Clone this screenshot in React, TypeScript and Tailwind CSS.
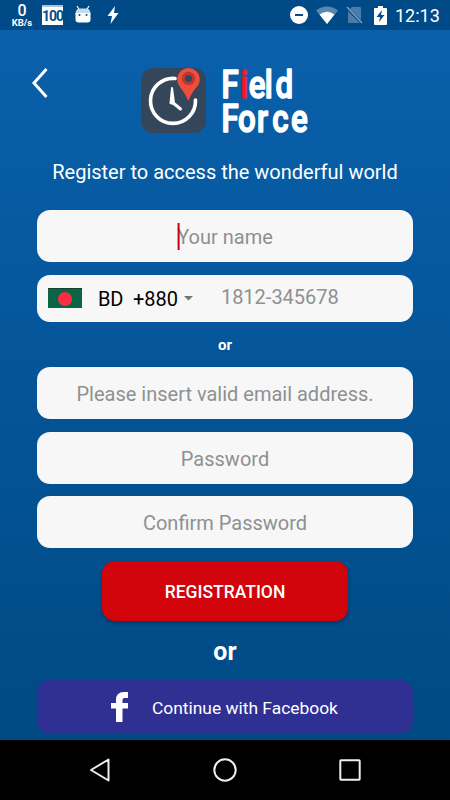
import React from "react";

function StatusBar() {
  return (
    <header className="flex h-[30px] shrink-0 items-center bg-[#004a87] text-white">
      <div className="ml-[11px] flex w-[22px] flex-col items-center pt-[2px]">
        <span className="h-[12px] text-[16px] leading-[12px] font-medium">0</span>
        <span className="mt-px h-[9px] text-[9.500px] leading-[9px] font-bold whitespace-nowrap">KB/s</span>
      </div>
      <div className="ml-[9px] flex h-[20px] w-[21px] items-center justify-center border-t-2 border-solid border-[#a9c3da] bg-white">
        <span className="text-[14px] leading-none font-bold tracking-[-1px] text-[#074b87]">100</span>
      </div>
      <svg className="ml-[12px]" width="16" height="20" viewBox="0 0 16 20">
        <path d="M2 1l2.5 4M14 1l-2.5 4" stroke="#fff" strokeWidth="1.2" />
        <path d="M.5 9q0-5.500 4.500-5.500h6q4.500 0 4.500 5.500z" fill="#c8dbea" />
        <path d="M.5 8h15v6.500q0 3-3 3h-9q-3 0-3-3z" fill="#fff" />
        <circle cx="4.500" cy="10" r="1" fill="#074b87" />
        <circle cx="11.500" cy="10" r="1" fill="#074b87" />
      </svg>
      <svg className="ml-[16px]" width="12" height="20" viewBox="0 0 12 20">
        <path d="M8 1L.5 11H5L3.500 19L11.500 8H7z" fill="#fff" />
      </svg>
      <div className="flex-1" />
      <svg width="18" height="18" viewBox="0 0 18 18">
        <circle cx="9" cy="9" r="9" fill="#fff" />
        <path d="M5 9h8" stroke="#074b87" strokeWidth="2" />
      </svg>
      <svg className="ml-[8px]" width="22" height="18" viewBox="0 0 22 18">
        <path d="M0 4.500Q11-3.500 22 4.500L11 18z" fill="#5888b2" />
        <path d="M3.500 8.500Q11 3 18.500 8.500L11 18z" fill="#fff" />
      </svg>
      <svg className="ml-[8px]" width="17" height="18" viewBox="0 0 17 18">
        <path d="M6 1h8q1 0 1 1v12L4 3zM2 5l12 12H3q-1 0-1-1z" fill="#4a7dab" />
        <path d="M1 1l15 16" stroke="#82a6c5" strokeWidth="1.300" />
      </svg>
      <svg className="ml-[11px]" width="13" height="19" viewBox="0 0 13 19">
        <path d="M4 0h5v2h3q1 0 1 1v15q0 1-1 1H1q-1 0-1-1V3q0-1 1-1h3z" fill="#fff" />
        <path d="M8 4L2.500 11H6l-1 5 5.500-7H7z" fill="#004a87" />
      </svg>
      <span className="mr-[10px] ml-[8px] w-[45px] pt-px text-[18px] leading-[30px] whitespace-nowrap">12:13</span>
    </header>
  );
}

function Logo() {
  return (
    <svg className="ml-[93px] overflow-visible" width="170" height="70" viewBox="0 0 170 70">
      <rect x="0" y="3" width="65" height="65" rx="12" fill="#34475a" />
      <path d="M34 13.500A22.500 22.500 0 1 0 54.500 35" fill="none" stroke="#fff" strokeWidth="3.600" strokeLinecap="round" />
      <path d="M31 23L29.500 38Q32 39 33 38z" fill="#fff" stroke="#fff" strokeWidth="2" strokeLinejoin="round" />
      <path d="M31 37L39.500 44" stroke="#fff" strokeWidth="3" strokeLinecap="round" />
      <path d="M47.500 36Q44 28 38 20.500A11.300 11.300 0 1 1 57 20.500Q50 28 47.500 36z" fill="#ef4d3e" />
      <circle cx="47.500" cy="13.500" r="6.800" fill="#bd382e" />
      <circle cx="47.500" cy="13.500" r="3.500" fill="#34475a" />
      <g
        className="font-['Roboto','Liberation_Sans',sans-serif] font-medium"
        fontSize="39"
        fill="#fff"
        stroke="#fff"
        strokeWidth="1.600"
        strokeLinejoin="round"
      >
        <text transform="translate(80.500 33) scale(.8 1)" x="0 23.500 34 54 67.500">
          F<tspan fill="#fb1720" stroke="#fb1720" strokeWidth="1">i</tspan>eld
        </text>
        <text transform="translate(80.500 67) scale(.8 1)" x="0 20.500 44.500 63.500 87">Force</text>
      </g>
    </svg>
  );
}

const fieldClass =
  "flex h-[52px] shrink-0 items-center justify-center rounded-[13px] bg-[#f7f7f7] text-[20px] text-[#8e9092]";

export default function App() {
  return (
    <div className="flex h-[800px] w-[450px] flex-col overflow-hidden bg-black font-['Roboto','Liberation_Sans',sans-serif]">
      <StatusBar />
      <main className="flex h-[710px] shrink-0 flex-col bg-linear-to-b from-[#0a60ab] to-[#004a84] px-[37.4px] text-white">
        <div className="mt-[35px] -ml-[6.400px] flex h-[70px] shrink-0 items-start">
          <svg width="17" height="36" viewBox="0 0 17 36">
            <path d="M15.500 4L3 18L15.500 32" fill="none" stroke="#fff" strokeWidth="3" />
          </svg>
          <Logo />
        </div>
        <p className="mt-[25px] h-[24px] shrink-0 text-center text-[20px] leading-[24px] whitespace-nowrap">
          Register to access the wonderful world
        </p>
        <div className={fieldClass + " mt-[26px]"}>
          <span className="z-10 -mr-[2px] h-[27px] w-[2px] translate-x-[0.6px] bg-[#c5000c]" />
          <span className="pt-[2px]">Your name</span>
        </div>
        <div className="mt-[12.5px] flex h-[47px] shrink-0 items-center rounded-[13px] bg-[#f7f7f7] text-[20px] text-black">
          <span className="ml-[11px] flex h-[20px] w-[34px] items-center justify-center border-t border-[#173f2d] bg-[#096448]">
            <span className="size-[14px] rounded-full bg-[#fb2f43]" />
          </span>
          <span className="ml-[15.5px] w-[35px] pt-[2px]">BD</span>
          <span className="w-[46px] pt-[2px]">+880</span>
          <svg className="ml-[5px]" width="9" height="5" viewBox="0 0 9 5">
            <path d="M0 0h9L4.500 4.500z" fill="#737577" />
          </svg>
          <span className="ml-[28px] pb-[2px] text-[#8e9092]">1812-345678</span>
        </div>
        <p className="mt-[14.5px] h-[18px] shrink-0 text-center text-[15px] leading-[18px] font-bold">or</p>
        <div className={fieldClass + " mt-[13px] pt-[2px]"}>Please insert valid email address.</div>
        <div className={fieldClass + " mt-[12.6px] pt-[2px]"}>Password</div>
        <div className={fieldClass + " mt-[12.4px] pt-[2px]"}>Confirm Password</div>
        <button className="mt-[13px] h-[60px] w-[246px] shrink-0 self-center rounded-[13px] bg-[#d1040c] pt-[2px] text-[17.500px] font-medium shadow-[0_2px_4px_rgba(0,0,0,0.3)]">
          REGISTRATION
        </button>
        <p className="mt-[17px] h-[28px] shrink-0 text-center text-[25px] leading-[28px] font-bold">or</p>
        <button className="mt-[14px] flex h-[54px] shrink-0 items-center rounded-[13px] bg-[#2f3092] text-[17.400px]">
          <svg className="ml-[73.600px]" width="17" height="30" viewBox="0 0 17 30">
            <path d="M17 0v6h-3.500q-2 0-2 2v3H17v5.500h-5.500V30H5V16.500H0V11h5V8q0-8 8-8z" fill="#fff" />
          </svg>
          <span className="ml-[24px] pt-[2px] whitespace-nowrap">Continue with Facebook</span>
        </button>
      </main>
      <nav className="flex h-[60px] shrink-0 items-center bg-black">
        <svg className="ml-[88px]" width="24" height="26" viewBox="0 0 24 26">
          <path d="M20.500 2.500v21L3 13z" fill="none" stroke="#eee" strokeWidth="2" strokeLinejoin="round" />
        </svg>
        <svg className="ml-[100px]" width="26" height="26" viewBox="0 0 26 26">
          <circle cx="13" cy="13" r="10.700" fill="none" stroke="#eee" strokeWidth="2" />
        </svg>
        <svg className="ml-[99px]" width="26" height="26" viewBox="0 0 26 26">
          <rect x="3.300" y="3.300" width="19.400" height="19.400" rx=".7" fill="none" stroke="#eee" strokeWidth="2" />
        </svg>
      </nav>
    </div>
  );
}
